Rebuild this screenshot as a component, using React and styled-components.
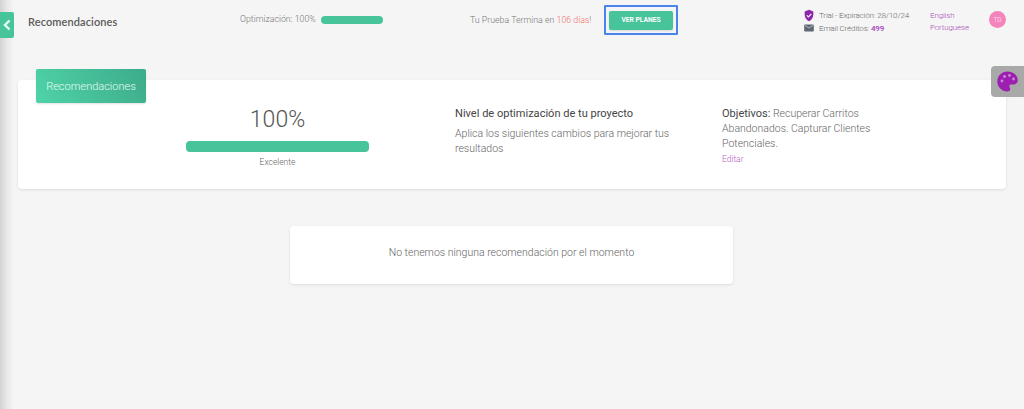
import React from "react";
import styled, { createGlobalStyle } from "styled-components";

const Global = createGlobalStyle`
  html, body { margin: 0; padding: 0; background: #f5f5f5; }
  body { font-family: Roboto, "Liberation Sans", sans-serif; font-weight: 300; color: #555; }
`;
const Page = styled.div`
  position: relative; width: 1024px; height: 409px; overflow: hidden; background: #f5f5f5;
`;
const SideShade = styled.div`
  position: absolute; left: 0; top: 0; bottom: 0; width: 14px;
  background: linear-gradient(to right, #d2d2d2, #e8e8e8 50%, #f5f5f5);
`;
const Toggle = styled.button`
  position: absolute; left: 0; top: 12px; width: 14px; height: 26px; padding: 0; border: 0;
  border-radius: 0 2px 2px 0; background: #48c49b; display: flex; align-items: center; justify-content: center;
`;
const Header = styled.header`
  height: 40px; display: flex; align-items: flex-start; position: relative;
`;
const Title = styled.h1`
  margin: 15px 0 0 28px; width: 212px; font: 600 11px/14px Lato, sans-serif; letter-spacing: .1px; color: #5a5a5a;
`;
const Optim = styled.div`
  width: 230px; margin-top: 14px; display: flex; align-items: center; gap: 5px;
  font-size: 8.8px; line-height: 11px; color: #777;
`;
const MiniBar = styled.div`width: 62px; height: 8px; border-radius: 4px; background: #48c49b;`;
const Trial = styled.div`
  width: 134px; margin-top: 15px; font-size: 8.8px; line-height: 11px; color: #777; white-space: nowrap;
  em { font-style: normal; color: #f0706a; }
`;
const Highlight = styled.div`
  width: 74px; height: 30px; margin-top: 5px; box-sizing: border-box; border: 2px solid #4a84ec;
  display: flex; align-items: center; justify-content: center; border-radius: 1px;
`;
const PlanButton = styled.button`
  width: 64px; height: 19px; padding: 0; border: 0; border-radius: 2px; background: #48c49b; color: #fff;
  font: 700 6.7px/19px Roboto, sans-serif; box-shadow: 0 1px 2px rgba(0,0,0,.12);
`;
const Status = styled.div`
  margin-left: 126px; margin-top: 9px; width: 126px; display: flex; flex-direction: column; gap: 1px;
  font-size: 8px; letter-spacing: -.15px; line-height: 11px; color: #666;
`;
const StatusRow = styled.div`
  display: flex; align-items: center; gap: 5px; height: 12px; white-space: nowrap;
  svg { width: 10px; flex: none; }
  b { font-weight: 500; color: #a43bb5; }
`;
const Langs = styled.div`
  margin-top: 11px; width: 59px; display: flex; flex-direction: column; gap: 2px;
  font-size: 8px; letter-spacing: -.15px; line-height: 10px; color: #a94bb5;
`;
const Avatar = styled.div`
  width: 17px; height: 17px; margin-top: 11px; border-radius: 50%; background: #f584bd; color: #fbd3e6;
  font-size: 6.5px; display: flex; align-items: center; justify-content: center; font-weight: 400;
`;
const Palette = styled.div`
  position: absolute; z-index: 2; right: 0; top: 66px; width: 33px; height: 31px; background: #a9a9a9;
  border-radius: 4px 0 0 4px; display: flex; align-items: center; justify-content: center;
`;
const Main = styled.main`padding: 40px 18px 0 18px;`;
const SummaryCard = styled.section`
  position: relative; height: 109px; background: #fff; border-radius: 4px;
  box-shadow: 0 1px 3px rgba(0,0,0,.1); display: grid;
  grid-template-columns: 183px 353px 190px; padding-left: 168px; box-sizing: border-box;
`;
const Tag = styled.div`
  position: absolute; left: 18px; top: -11px; width: 110px; height: 34px; border-radius: 2px;
  background: linear-gradient(60deg, #4fd3a8, #3dab8a); color: #e9fbf4; font-size: 11px;
  display: flex; align-items: center; justify-content: center; box-shadow: 0 1px 2px rgba(0,0,0,.12);
`;
const ScoreCol = styled.div`display: flex; flex-direction: column; align-items: center; padding-top: 25px;`;
const Score = styled.div`font-size: 23px; line-height: 29px; color: #555;`;
const ScoreBar = styled.div`width: 183px; height: 11px; margin-top: 7px; border-radius: 4px; background: #48c49b;`;
const ScoreLabel = styled.div`font-size: 8.5px; line-height: 11px; margin-top: 5px; color: #666;`;
const InfoCol = styled.div`padding: 27px 0 0 86px;`;
const InfoTitle = styled.h2`margin: 0; font: 400 11.05px/14px Roboto, sans-serif; color: #444; white-space: nowrap;`;
const InfoText = styled.p`margin: 6px 0 0; width: 225px; font-size: 10.5px; line-height: 14.5px; color: #666;`;
const GoalCol = styled.div`padding-top: 26px; font-size: 10.5px; line-height: 15px; color: #666;
  strong { font-weight: 400; font-size: 11px; color: #444; }
`;
const EditLink = styled.a`display: block; margin-top: 2px; font-size: 8.5px; line-height: 12px; color: #b35cc0;`;
const EmptyCard = styled.section`
  width: 443px; height: 58px; margin: 37px 0 0 272px; padding-bottom: 6px; box-sizing: border-box;
  background: #fff; border-radius: 4px;
  box-shadow: 0 1px 3px rgba(0,0,0,.1); display: flex; align-items: center; justify-content: center;
  font-size: 10.5px; color: #666;
`;

export default function App() {
  return (
    <Page>
      <Global />
      <SideShade />
      <Toggle aria-label="Contraer">
        <svg width="10" height="12" viewBox="0 0 10 12" fill="none" stroke="#e8fbf4" strokeWidth="2.4">
          <path d="M7.5 1.5 3 6l4.5 4.5" />
        </svg>
      </Toggle>
      <Header>
        <Title>Recomendaciones</Title>
        <Optim>Optimización: 100%<MiniBar /></Optim>
        <Trial>Tu Prueba Termina en <em>106 días</em>!</Trial>
        <Highlight><PlanButton>VER PLANES</PlanButton></Highlight>
        <Status>
          <StatusRow>
            <svg viewBox="0 0 12 14" height="13">
              <path d="M6 0 .8 2.200v3.600C.8 9.400 3 12.600 6 14c3-1.400 5.200-4.600 5.200-8.200V2.200z" fill="#8e24aa" />
              <path d="M3.400 6.800 5.300 8.700 8.800 5" fill="none" stroke="#fff" strokeWidth="1.300" />
            </svg>
            Trial - Expiración: 28/10/24
          </StatusRow>
          <StatusRow>
            <svg viewBox="0 0 12 10" height="8">
              <rect width="12" height="9" y=".5" rx="1" fill="#5f6772" />
              <path d="M.8 1.500 6 5l5.200-3.500" fill="none" stroke="#c8cbd0" strokeWidth="1" />
            </svg>
            <span>Email Créditos: <b>499</b></span>
          </StatusRow>
        </Status>
        <Langs><span>English</span><span>Portuguese</span></Langs>
        <Avatar>TD</Avatar>
      </Header>
      <Palette>
        <svg width="21" height="21" viewBox="0 0 21 21">
          <path fill="#9c1fb0" d="M10.500.500C4.700.500.300 4.900.300 10.500s4.600 10 10.200 10c1.700 0 2.700-1.100 2.700-2.400 0-1.400-.9-1.800-.9-2.900 0-1 .8-1.700 1.900-1.700h2.300c2.400 0 4.200-1.700 4.200-4C20.700 4 16.200.500 10.500.500z" />
          <circle cx="5" cy="10" r="1.400" fill="#c98ad6" />
          <circle cx="7.500" cy="5.500" r="1.400" fill="#c98ad6" />
          <circle cx="12.500" cy="4.500" r="1.400" fill="#c98ad6" />
          <circle cx="16.500" cy="8" r="1.400" fill="#c98ad6" />
        </svg>
      </Palette>
      <Main>
        <SummaryCard>
          <Tag>Recomendaciones</Tag>
          <ScoreCol>
            <Score>100%</Score>
            <ScoreBar />
            <ScoreLabel>Excelente</ScoreLabel>
          </ScoreCol>
          <InfoCol>
            <InfoTitle>Nivel de optimización de tu proyecto</InfoTitle>
            <InfoText>Aplica los siguientes cambios para mejorar tus resultados</InfoText>
          </InfoCol>
          <GoalCol>
            <strong>Objetivos:</strong> Recuperar Carritos Abandonados. Capturar Clientes Potenciales.
            <EditLink>Editar</EditLink>
          </GoalCol>
        </SummaryCard>
        <EmptyCard>No tenemos ninguna recomendación por el momento</EmptyCard>
      </Main>
    </Page>
  );
}
